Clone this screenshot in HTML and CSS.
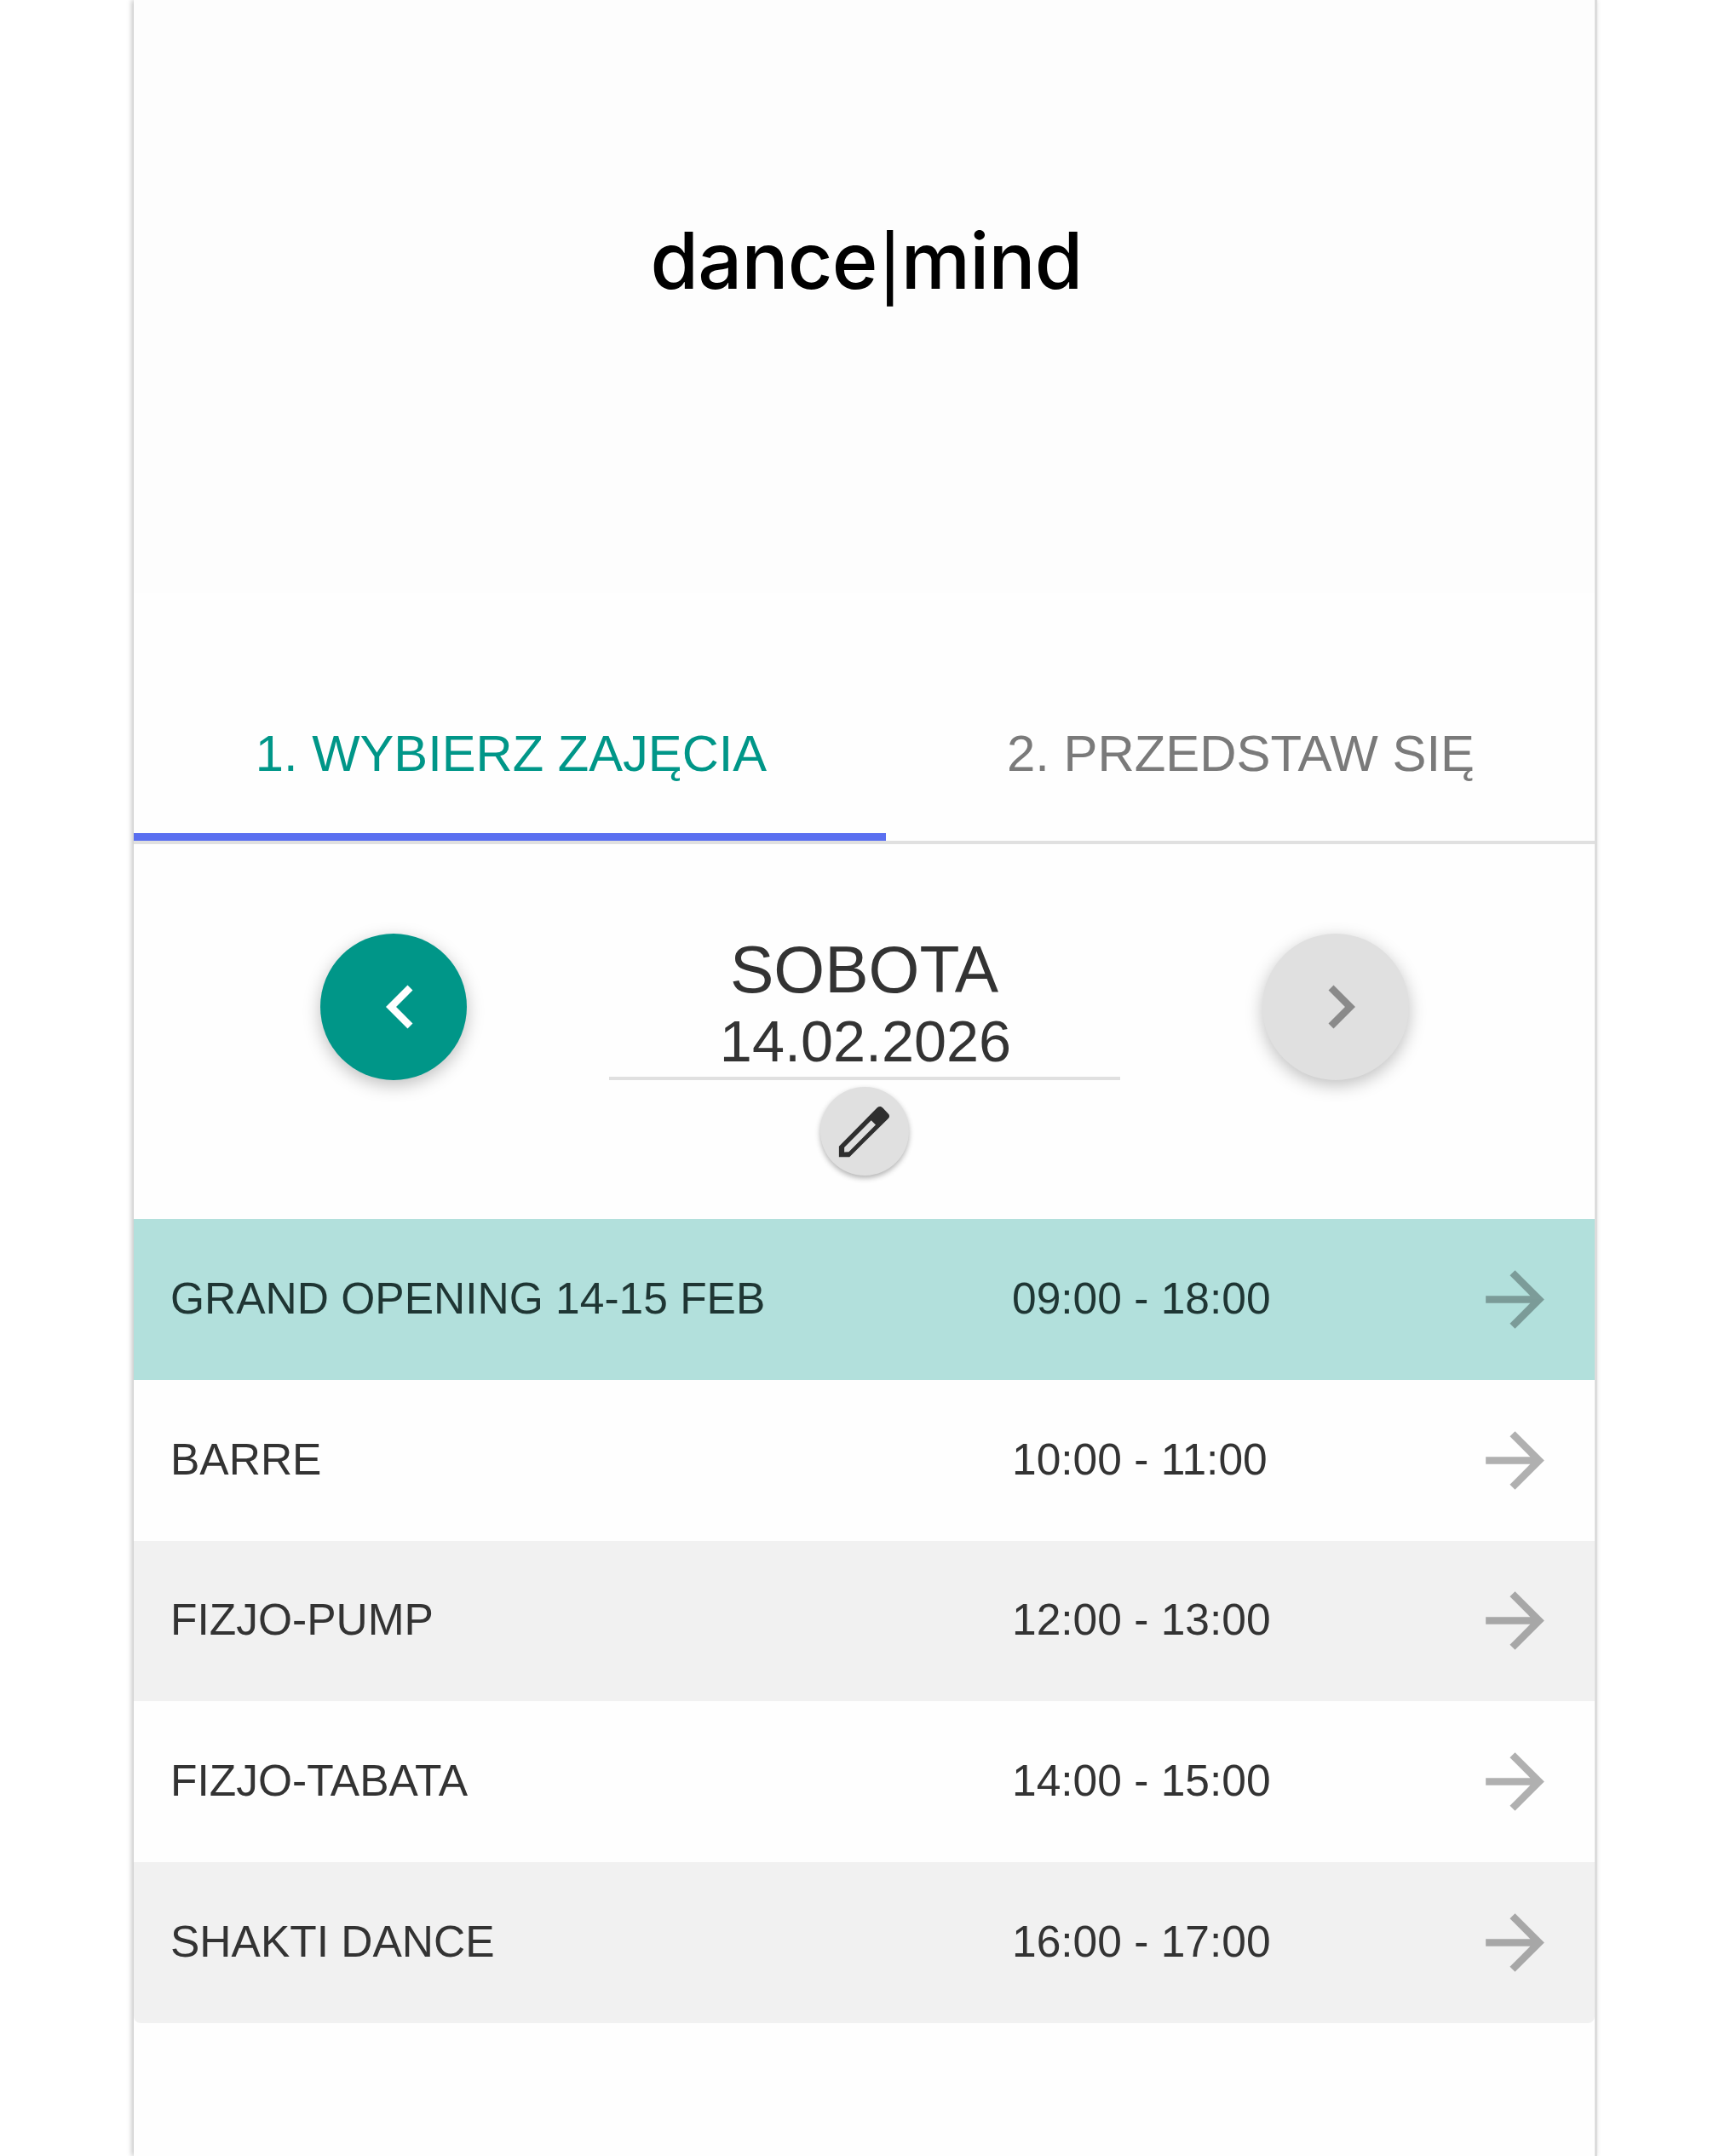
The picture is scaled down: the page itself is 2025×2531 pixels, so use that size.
FILE: index.html
```html
<!DOCTYPE html>
<html lang="pl">
<head>
    <meta charset="UTF-8">
    <meta name="viewport" content="width=device-width, initial-scale=1.0">
    <title>dance|mind</title>
    <link rel="stylesheet" href="styles.css">
</head>
<body>
    <div class="container">
        <header class="header">
            <h1 class="logo">dance<span class="logo-bar">|</span>mind</h1>
        </header>

        <nav class="tabs">
            <div class="tab active">1. WYBIERZ ZAJĘCIA</div>
            <div class="tab">2. PRZEDSTAW SIĘ</div>
        </nav>

        <section class="date-picker">
            <button class="round-btn prev" aria-label="Poprzedni dzień">
                <svg viewBox="0 0 24 24"><path d="M15.41 7.41 14 6l-6 6 6 6 1.41-1.41L10.83 12z"/></svg>
            </button>
            <div class="date">
                <div class="day-name">SOBOTA</div>
                <div class="day-date">14.02.2026</div>
                <button class="edit-btn" aria-label="Zmień datę">
                    <svg viewBox="0 0 24 24"><path fill-rule="evenodd" d="M17.66 3c-.35 0-.7.14-1 .42L3 17.25V21h3.75L20.6 7.3c.5-.5.5-1.2 0-1.7l-2-2.1c-.26-.3-.6-.5-.94-.5zM14.5 8l1.6 1.6-9.6 9.6-1.6.1v-1.7z"/></svg>
                </button>
            </div>
            <button class="round-btn next" aria-label="Następny dzień" disabled>
                <svg viewBox="0 0 24 24"><path d="M10 6 8.59 7.41 13.17 12l-4.58 4.59L10 18l6-6z"/></svg>
            </button>
        </section>

        <ul class="classes">
            <li class="class-row selected">
                <span class="class-name">GRAND OPENING 14-15 FEB</span>
                <span class="class-time">09:00 - 18:00</span>
                <svg class="arrow" viewBox="0 0 24 24"><path d="m12 4-1.41 1.41L16.17 11H4v2h12.17l-5.58 5.59L12 20l8-8z"/></svg>
            </li>
            <li class="class-row">
                <span class="class-name">BARRE</span>
                <span class="class-time">10:00 - 11:00</span>
                <svg class="arrow" viewBox="0 0 24 24"><path d="m12 4-1.41 1.41L16.17 11H4v2h12.17l-5.58 5.59L12 20l8-8z"/></svg>
            </li>
            <li class="class-row">
                <span class="class-name">FIZJO-PUMP</span>
                <span class="class-time">12:00 - 13:00</span>
                <svg class="arrow" viewBox="0 0 24 24"><path d="m12 4-1.41 1.41L16.17 11H4v2h12.17l-5.58 5.59L12 20l8-8z"/></svg>
            </li>
            <li class="class-row">
                <span class="class-name">FIZJO-TABATA</span>
                <span class="class-time">14:00 - 15:00</span>
                <svg class="arrow" viewBox="0 0 24 24"><path d="m12 4-1.41 1.41L16.17 11H4v2h12.17l-5.58 5.59L12 20l8-8z"/></svg>
            </li>
            <li class="class-row">
                <span class="class-name">SHAKTI DANCE</span>
                <span class="class-time">16:00 - 17:00</span>
                <svg class="arrow" viewBox="0 0 24 24"><path d="m12 4-1.41 1.41L16.17 11H4v2h12.17l-5.58 5.59L12 20l8-8z"/></svg>
            </li>
        </ul>
    </div>
</body>
</html>
```
FILE: styles.css
```css
:root {
    --primary: #009688;
    --primary-light: #b2e0dc;
    --indicator: #5a6ff0;
    --divider: #e0e0e0;
    --stripe: #f1f1f1;
    --text-color: #333;
    --text-muted: #7a7a7a;
}

* {
    box-sizing: border-box;
}

body {
    margin: 0;
    font-family: "Liberation Sans", Arial, sans-serif;
    background-color: #fff;
    color: var(--text-color);
}

.container {
    width: 1718px;
    min-height: 2531px;
    margin-left: 157px;
    background-color: #fefefe;
    border-right: 3px solid #dcdcdc;
    box-shadow: -2px 0 6px rgba(0, 0, 0, 0.25);
}

/* Header */
.header {
    height: 696px;
    margin-bottom: 86px;
    padding-top: 246px;
    background-color: #fdfdfd;
}

.logo {
    margin: 0;
    padding-left: 5px;
    text-align: center;
    font-family: Inter, sans-serif;
    font-size: 91.5px;
    font-weight: 550;
    line-height: 120px;
    letter-spacing: -0.8px;
    color: #000;
}

.logo-bar {
    margin: 0 1px 0 2px;
    font-size: 75px;
    font-weight: 500;
    line-height: 1;
    vertical-align: -3px;
}

/* Tabs */
.tabs {
    display: flex;
    height: 209px;
    border-bottom: 4px solid var(--divider);
}

.tab {
    flex: 1;
    line-height: 205px;
    padding-left: 1px;
    text-align: center;
    font-size: 59.9px;
    color: var(--text-muted);
}

.tab.active {
    flex: 0 0 883px;
    padding-left: 3px;
    font-size: 59.7px;
    color: var(--primary);
    border-bottom: 9px solid var(--indicator);
}

/* Date navigation */
.date-picker {
    display: flex;
    justify-content: center;
    align-items: flex-start;
    gap: 167px;
    height: 440px;
    padding-top: 105px;
}

.round-btn,
.edit-btn {
    display: flex;
    justify-content: center;
    align-items: center;
    padding: 0;
    border: none;
    border-radius: 50%;
    background-color: var(--divider);
    cursor: pointer;
}

.round-btn {
    width: 172px;
    height: 172px;
    box-shadow: 0 6px 20px rgba(0, 0, 0, 0.25);
}

.round-btn svg {
    width: 102px;
    height: 102px;
    fill: #8a8a8a;
}

.round-btn.prev {
    padding-left: 17px;
    background-color: var(--primary);
}

.round-btn.prev svg {
    fill: #fff;
}

.round-btn.next {
    padding-left: 12px;
}

.date {
    display: flex;
    flex-direction: column;
    align-items: center;
    width: 600px;
}

.day-name {
    font-size: 77px;
    line-height: 85px;
}

.day-date {
    width: 100%;
    padding-left: 3px;
    border-bottom: 4px solid var(--divider);
    text-align: center;
    font-size: 68.4px;
    line-height: 83px;
}

.edit-btn {
    width: 104px;
    height: 104px;
    margin-top: 8px;
    box-shadow: 0 3px 6px rgba(0, 0, 0, 0.3);
}

.edit-btn svg {
    width: 79px;
    height: 79px;
    fill: #2f2f2f;
}

/* Class list */
.classes {
    margin: 0;
    padding: 0;
    list-style: none;
    border-radius: 0 0 8px 8px;
    overflow: hidden;
}

.class-row {
    display: flex;
    align-items: center;
    height: 188.8px;
    padding: 0 42px 0 43px;
    font-size: 51.5px;
}

.class-row:nth-child(odd) {
    background-color: var(--stripe);
}

.class-row.selected {
    background-color: var(--primary-light);
    color: #1f3634;
}

.class-name,
.class-time {
    padding-bottom: 3px;
}

.class-name {
    width: 988px;
}

.arrow {
    width: 103px;
    height: 103px;
    margin-left: auto;
    fill: #000;
    opacity: 0.3;
}
```
